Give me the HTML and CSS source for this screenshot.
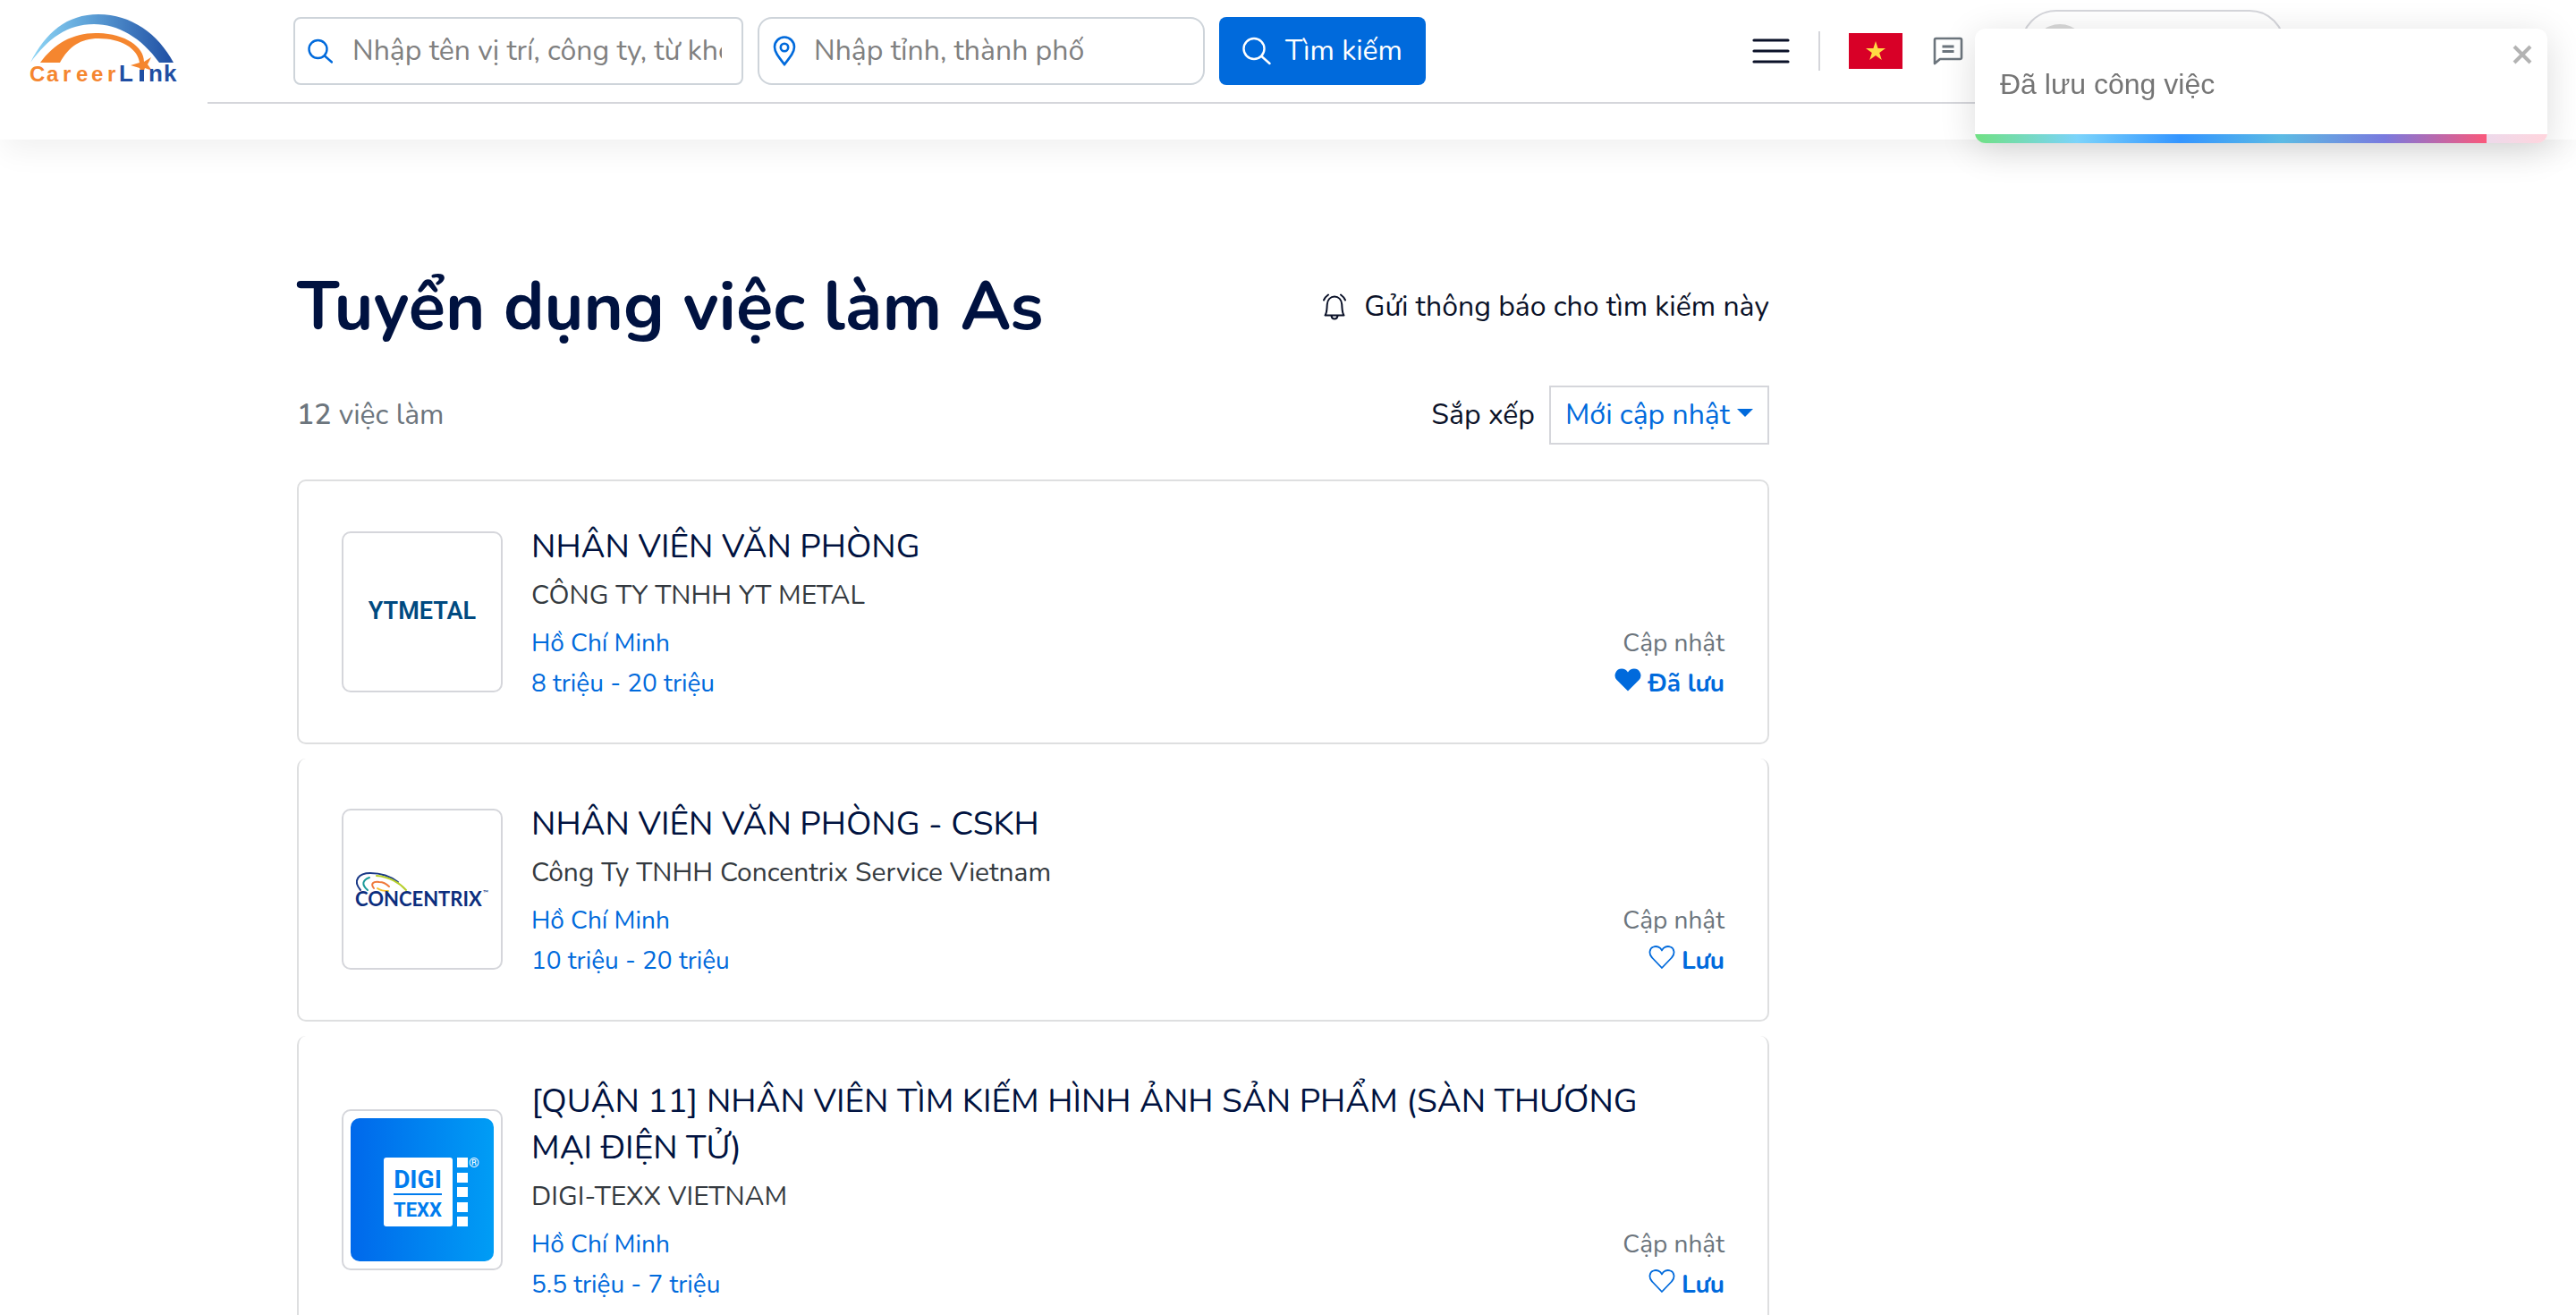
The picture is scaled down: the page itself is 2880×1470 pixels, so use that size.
FILE: index.html
```html
<!DOCTYPE html>
<html lang="vi">
<head>
<meta charset="utf-8">
<meta name="viewport" content="width=device-width, initial-scale=1">
<title>Tuyển dụng việc làm As</title>
<link rel="stylesheet" href="styles.css">
</head>
<body>
<header class="header">
  <a class="brand" href="#" aria-label="CareerLink">
    <svg class="brand-logo" viewBox="0 0 166 77" aria-hidden="true">
      <defs>
        <linearGradient id="arc" x1="0" x2="1" y1="0" y2="0">
          <stop offset="0" stop-color="#8fd6f5"/>
          <stop offset=".35" stop-color="#64a9dc"/>
          <stop offset="1" stop-color="#1f4ea3"/>
        </linearGradient>
      </defs>
      <path fill="url(#arc)" d="M0 54C17 20 41 0 76 0c37 0 67 22 84 54h-16C124 26 98 11 71 11 41 11 20 27 0 54z"/>
      <path fill="#f5862f" d="M11 54c16-22 38-34 65-33 30 1 51 15 51 32l8-5-4 8 5 7-8-3-3 9-3-9-10-3 10-3c-2-16-21-27-46-27-20 0-33 9-43 27z"/>
      <text class="brand-warm" x="-1" y="75">C</text>
      <text class="brand-warm" x="18" y="75">a</text>
      <text class="brand-warm" x="36" y="75">r</text>
      <text class="brand-warm" x="51" y="75">e</text>
      <text class="brand-warm" x="68" y="75">e</text>
      <text class="brand-warm" x="86" y="75">r</text>
      <text class="brand-cool" x="99" y="75">L</text>
      <path fill="#1f4ea3" d="M122 62h5v13h-5z"/>
      <text class="brand-cool" x="132" y="75">n</text>
      <text class="brand-cool" x="149" y="75">k</text>
    </svg>
  </a>
  <nav class="nav">
    <form class="search">
      <label class="field field-keyword">
        <svg class="icon-search" viewBox="0 0 28 28" fill="none" stroke="currentColor" stroke-width="2.4" stroke-linecap="round" aria-hidden="true"><circle cx="11.500" cy="12" r="10"/><path d="M19 19.500l8 7"/></svg>
        <input type="text" placeholder="Nhập tên vị trí, công ty, từ khóa" aria-label="Từ khóa">
      </label>
      <label class="field field-place">
        <svg class="icon-pin" viewBox="0 0 26 34" fill="none" stroke="currentColor" stroke-width="2.600" aria-hidden="true"><path d="M13 32C6 23 2 18 2 12.500a11 11 0 0 1 22 0C24 18 20 23 13 32z"/><circle cx="13" cy="13" r="4.200"/></svg>
        <input type="text" placeholder="Nhập tỉnh, thành phố" aria-label="Địa điểm">
      </label>
      <button class="search-button" type="submit">
        <svg class="icon-search-large" viewBox="0 0 32 32" fill="none" stroke="currentColor" stroke-width="2.400" stroke-linecap="round" aria-hidden="true"><circle cx="13" cy="13.500" r="11.500"/><path d="M21.500 22l9 8"/></svg>
        Tìm kiếm
      </button>
    </form>
    <div class="tools">
      <button class="tool" type="button" aria-label="Menu">
        <svg class="icon-menu" viewBox="0 0 42 28" stroke="currentColor" stroke-width="3.200" stroke-linecap="round" aria-hidden="true"><path d="M2 2h38M2 14h38M2 26h38"/></svg>
      </button>
      <span class="divider"></span>
      <a class="flag" href="#" aria-label="Tiếng Việt">
        <svg viewBox="0 0 60 40" aria-hidden="true"><path fill="#d80027" d="M0 0h60v40H0z"/><path fill="#ffda44" d="M30 9l2.600 8H41l-6.800 4.900 2.600 8L30 25l-6.800 4.900 2.600-8L19 17h8.400z"/></svg>
      </a>
      <a class="chat" href="#" aria-label="Tin nhắn">
        <svg viewBox="0 0 34 32" fill="none" stroke="currentColor" stroke-width="2.600" stroke-linejoin="round" aria-hidden="true"><path d="M2 30V3.500A1.500 1.500 0 0 1 3.500 2h27A1.500 1.500 0 0 1 32 3.500v20a1.500 1.500 0 0 1-1.500 1.500H8z"/><path stroke-width="3" d="M10.500 11h13M10.500 16.500h13"/></svg>
      </a>
      <a class="account" href="#" aria-label="Tài khoản"><span class="avatar"></span></a>
    </div>
  </nav>
</header>

<main class="container">
  <div class="results">
    <div class="heading">
      <h1>Tuyển dụng việc làm As</h1>
      <a class="alert" href="#">
        <svg class="icon-bell" viewBox="0 0 26 30" fill="none" stroke="currentColor" stroke-width="2" stroke-linecap="round" stroke-linejoin="round" aria-hidden="true"><path d="M2.500 24.500h21c-2.200-3.200-1.800-7-2.300-12.500C20.700 7 17.500 3.500 13 3.500S5.300 7 4.800 12c-.5 5.500-.1 9.300-2.300 12.500z"/><path d="M9.500 25c.4 2.400 1.600 3.500 3.500 3.500s3.100-1.100 3.500-3.500M1 7.500Q2.500 4 6 1.500M25 7.500Q23.500 4 20 1.500"/></svg>
        Gửi thông báo cho tìm kiếm này
      </a>
    </div>
    <div class="toolbar">
      <p class="count"><b>12</b> việc làm</p>
      <div class="sort">
        <label for="sort">Sắp xếp</label>
        <div class="select">
          <select id="sort"><option>Mới cập nhật</option></select>
          <svg class="caret" viewBox="0 0 18 9" aria-hidden="true"><path fill="currentColor" d="M0 0h18L9 9z"/></svg>
        </div>
      </div>
    </div>

    <ul class="jobs">
      <li class="job">
        <a class="logo" href="#"><span class="logo-ytmetal">YTMETAL</span></a>
        <div class="job-body">
          <h2><a href="#">NHÂN VIÊN VĂN PHÒNG</a></h2>
          <a class="company" href="#">CÔNG TY TNHH YT METAL</a>
          <div class="job-foot">
            <div class="facts"><a href="#">Hồ Chí Minh</a><span>8 triệu - 20 triệu</span></div>
            <div class="status">
              <span class="updated">Cập nhật</span>
              <button class="save" type="button">
                <svg class="heart" viewBox="0 0 30 26" fill="currentColor" aria-hidden="true"><path d="M15 25.500L2.500 13A7.500 7.500 0 0 1 8.200.5C11 .5 13.500 2 15 4.500 16.500 2 19 .5 21.800.5A7.500 7.500 0 0 1 27.500 13z"/></svg>
                Đã lưu
              </button>
            </div>
          </div>
        </div>
      </li>
      <li class="job">
        <a class="logo" href="#" aria-label="Concentrix">
          <svg class="logo-concentrix" viewBox="0 0 150 40" aria-hidden="true">
            <g fill="none" stroke-linecap="round">
              <path stroke="#1b3a86" stroke-width="2" d="M6 21C-3 10 4 2 17 2c13 0 23 4 31 10"/>
              <path stroke="#1c9a9a" stroke-width="2" d="M14 21C7 15 8 10 16 7"/>
              <path stroke="#b7cf2c" stroke-width="2" d="M24 5c14 1 26 8 33 16"/>
              <path stroke="#f07a3c" stroke-width="2" d="M21 19c-4-5-1-8 6-7 5 0 8 2 11 5"/>
              <path stroke="#f2c230" stroke-width="2" d="M25 19c3 2 7 3 12 3"/>
            </g>
            <text class="concentrix-name" x="0" y="39">CONCENTRIX</text>
            <text class="concentrix-mark" x="143" y="27">™</text>
          </svg>
        </a>
        <div class="job-body">
          <h2><a href="#">NHÂN VIÊN VĂN PHÒNG - CSKH</a></h2>
          <a class="company" href="#">Công Ty TNHH Concentrix Service Vietnam</a>
          <div class="job-foot">
            <div class="facts"><a href="#">Hồ Chí Minh</a><span>10 triệu - 20 triệu</span></div>
            <div class="status">
              <span class="updated">Cập nhật</span>
              <button class="save" type="button">
                <svg class="heart" viewBox="0 0 30 26" fill="none" stroke="currentColor" stroke-width="1.800" stroke-linejoin="round" aria-hidden="true"><path d="M15 25L4 13.500C0 9.500 1 3 5.500 1.500 9.500 0 13.500 2 15 5.500 16.500 2 20.500 0 24.500 1.500 29 3 30 9.500 26 13.500z"/></svg>
                Lưu
              </button>
            </div>
          </div>
        </div>
      </li>
      <li class="job">
        <a class="logo" href="#" aria-label="Digi-Texx">
          <svg class="logo-digitexx" viewBox="0 0 160 160" aria-hidden="true">
            <defs><linearGradient id="digi"><stop offset="0" stop-color="#0068eb"/><stop offset="1" stop-color="#009df5"/></linearGradient></defs>
            <rect width="160" height="160" rx="10" fill="url(#digi)"/>
            <rect x="37" y="44" width="77" height="77" rx="3" fill="#fff"/>
            <path fill="#fff" d="M119 44h12v11h-12zM119 61h12v11h-12zM119 77h12v11h-12zM119 94h12v11h-12zM119 110h12v11h-12z"/>
            <path fill="#007cee" d="M48 84h54v2H48z"/>
            <text class="digi-name" x="75" y="78">DIGI</text>
            <text class="texx-name" x="75" y="110">TEXX</text>
            <text class="digi-mark" x="132" y="55">®</text>
          </svg>
        </a>
        <div class="job-body">
          <h2><a href="#">[QUẬN 11] NHÂN VIÊN TÌM KIẾM HÌNH ẢNH SẢN PHẨM (SÀN THƯƠNG MẠI ĐIỆN TỬ)</a></h2>
          <a class="company" href="#">DIGI-TEXX VIETNAM</a>
          <div class="job-foot">
            <div class="facts"><a href="#">Hồ Chí Minh</a><span>5.5 triệu - 7 triệu</span></div>
            <div class="status">
              <span class="updated">Cập nhật</span>
              <button class="save" type="button">
                <svg class="heart" viewBox="0 0 30 26" fill="none" stroke="currentColor" stroke-width="1.800" stroke-linejoin="round" aria-hidden="true"><path d="M15 25L4 13.500C0 9.500 1 3 5.500 1.500 9.500 0 13.500 2 15 5.500 16.500 2 20.500 0 24.500 1.500 29 3 30 9.500 26 13.500z"/></svg>
                Lưu
              </button>
            </div>
          </div>
        </div>
      </li>
    </ul>
  </div>
</main>

<div class="toast" role="alert">
  <p>Đã lưu công việc</p>
  <button class="toast-close" type="button" aria-label="Đóng">
    <svg viewBox="0 0 22 22" stroke="currentColor" stroke-width="4" aria-hidden="true"><path d="M2 2l18 18M20 2L2 20"/></svg>
  </button>
  <div class="progress"><div class="progress-bar" style="width: 89.4%"></div></div>
</div>
</body>
</html>
```
FILE: styles.css
```css
* { box-sizing: border-box; }

body {
  margin: 0;
  background: #fff;
  color: #0a1128;
  font: 400 32px/48px Nunito, "Nunito Sans", Lato, sans-serif;
}

h1, h2, p, ul { margin: 0; padding: 0; }
a { color: inherit; text-decoration: none; }
svg { display: block; flex: none; }
input, select, button { font: inherit; color: inherit; }
button { padding: 0; border: 0; background: none; }

/* Header */
.header {
  display: flex;
  align-items: flex-start;
  padding-bottom: 40px;
  background: #fff;
  box-shadow: 0 16px 32px -4px rgba(0, 0, 0, .06);
}
.brand { padding: 16px 32px 0 34px; }
.brand-logo { width: 166px; height: 77px; overflow: visible; }
.brand-warm, .brand-cool { font: 700 24px "Liberation Sans", sans-serif; fill: #f5862f; }
.brand-cool { font-size: 26px; fill: #1f4ea3; }

.nav {
  flex: 1;
  display: flex;
  align-items: center;
  justify-content: space-between;
  height: 116px;
  margin-right: 232px;
  padding: 0 93px 0 96px;
  border-bottom: 2px solid #d5d6db;
}
.search { display: flex; gap: 16px; }
.field {
  display: flex;
  align-items: center;
  height: 76px;
  border: 2px solid #ced4da;
  border-radius: 8px;
  color: #006adc;
}
.field-keyword { width: 503px; padding: 0 22px 0 14px; gap: 22px; }
.field-place { width: 500px; padding: 0 22px 0 15px; gap: 20px; border-radius: 16px; }
.field input {
  flex: 1;
  min-width: 0;
  padding: 0;
  border: 0;
  outline: 0;
  background: none;
}
.field input::placeholder { color: #808080; opacity: 1; }
.icon-search { width: 28px; height: 28px; }
.icon-pin { width: 26px; height: 34px; }
.search-button {
  display: flex;
  align-items: center;
  justify-content: center;
  gap: 16px;
  width: 231px;
  height: 76px;
  border-radius: 8px;
  background: #006adc;
  color: #fff;
}
.icon-search-large { width: 32px; height: 32px; }

.tools { display: flex; align-items: center; }
.icon-menu { width: 42px; height: 28px; }
.divider { width: 2px; height: 44px; margin: 0 32px; background: #d5d6db; }
.flag svg { width: 60px; height: 40px; }
.chat { margin: 0 64px 0 34px; color: #6c757d; }
.chat svg { width: 34px; height: 32px; }
.account {
  display: flex;
  align-items: center;
  width: 296px;
  height: 92px;
  padding: 0 12px;
  border: 2px solid #d5d6db;
  border-radius: 40px;
}
.avatar { width: 60px; height: 60px; border-radius: 50%; background: #d9d9d9; }

/* Results */
.container { max-width: 2216px; margin: 0 auto; padding-top: 139px; }
.results { max-width: 1646px; }
.heading, .toolbar { display: flex; align-items: center; justify-content: space-between; }
.heading { margin-bottom: 40px; }
h1 { font-size: 76px; line-height: 96px; font-weight: 700; color: #001240; }
.alert { display: flex; align-items: center; gap: 20px; }
.icon-bell { width: 26px; height: 30px; }
.toolbar { margin-bottom: 39px; }
.count { color: #6c757d; }
.count b { font-weight: 600; }
.sort { display: flex; align-items: center; gap: 16px; }
.select { position: relative; color: #006adc; }
.select select {
  display: block;
  appearance: none;
  width: 246px;
  height: 66px;
  padding: 0 16px;
  border: 2px solid #d5d6db;
  border-radius: 0;
  background: #fff;
}
.caret {
  position: absolute;
  top: 26px;
  right: 18px;
  width: 18px;
  height: 9px;
  pointer-events: none;
}

.jobs { display: grid; gap: 16px; list-style: none; }
.job {
  display: flex;
  align-items: center;
  gap: 32px;
  padding: 42px 48px 43px;
  border: 2px solid #dedfe0;
  border-top: 0 solid transparent;
  border-radius: 10px;
}
.job:first-child { border-top: 2px solid #dedfe0; }
.logo {
  display: grid;
  place-items: center;
  flex: none;
  width: 180px;
  height: 180px;
  border: 2px solid #d5d6db;
  border-radius: 10px;
}
.logo-ytmetal { font: 600 27px/45px Roboto, sans-serif; color: #004a80; }
.logo-concentrix { width: 150px; height: 40px; overflow: visible; }
.concentrix-name { font: 700 22px Lato, sans-serif; fill: #0c2e7e; }
.concentrix-mark { font: 400 8px Lato, sans-serif; fill: #0c2e7e; }
.logo-digitexx { width: 160px; height: 160px; }
.digi-name, .texx-name {
  font: 700 28px "Liberation Sans Narrow", Roboto, sans-serif;
  fill: #007cee;
  text-anchor: middle;
}
.texx-name { font-size: 22px; }
.digi-mark { font: 400 15px Roboto, sans-serif; fill: #fff; }

.job-body { flex: 1; min-width: 0; padding-top: 5px; }
h2 {
  margin-bottom: 6px;
  padding-right: 92px;
  font-size: 37px;
  line-height: 52px;
  font-weight: 400;
  color: #001240;
}
.company { display: block; margin-bottom: 9px; font-size: 30px; line-height: 45px; color: #343a40; }
.job-foot { display: flex; justify-content: space-between; font-size: 28px; line-height: 45px; }
.facts, .status { display: flex; flex-direction: column; }
.facts { color: #006adc; }
.status { align-items: flex-end; }
.updated { color: #6c757d; }
.save { display: flex; align-items: center; gap: 7px; font-weight: 700; color: #006adc; }
.heart { width: 30px; height: 26px; margin-bottom: 10px; }

/* Toast */
.toast {
  position: fixed;
  top: 32px;
  right: 32px;
  display: flex;
  align-items: flex-start;
  justify-content: space-between;
  width: 640px;
  height: 128px;
  padding: 18px 17px 22px 28px;
  overflow: hidden;
  border-radius: 12px;
  background: #fff;
  box-shadow: 0 8px 40px rgba(0, 0, 0, .14);
  color: #757575;
  font-family: "Liberation Sans", sans-serif;
}
.toast p { align-self: center; }
.toast-close { color: #b3b3b3; }
.toast-close svg { width: 22px; height: 22px; }
.progress { position: absolute; right: 0; bottom: 0; left: 0; height: 10px; }
.progress::before, .progress-bar {
  content: "";
  display: block;
  height: 10px;
  background: linear-gradient(to right, #4cd964, #5ac8fa, #007aff, #34aadc, #5856d6, #ff2d55);
}
.progress::before { position: absolute; inset: 0; opacity: .2; }
.progress-bar { opacity: .75; }
```
